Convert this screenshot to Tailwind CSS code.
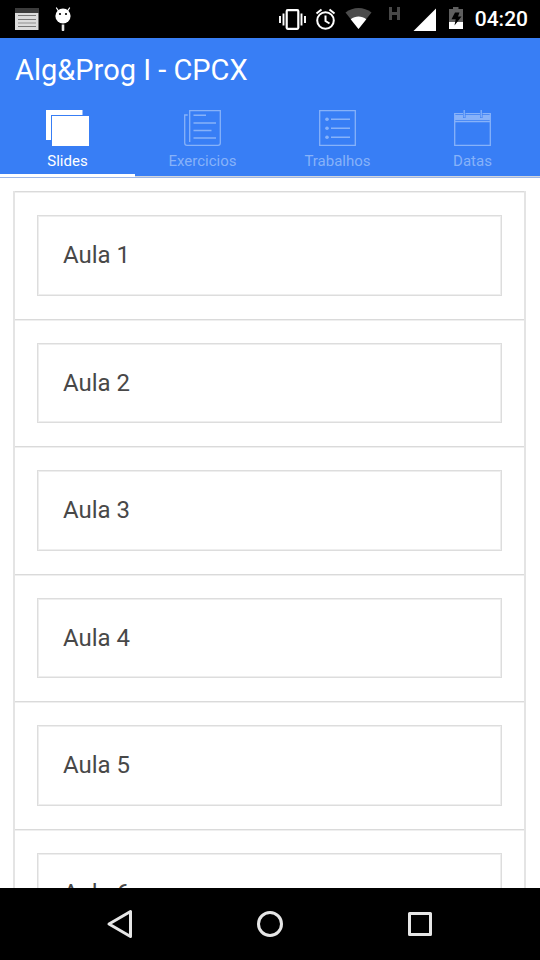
<!DOCTYPE html>
<html lang="pt-BR">
<head>
<meta charset="utf-8">
<meta name="viewport" content="width=device-width, initial-scale=1">
<title>Alg&amp;Prog I - CPCX</title>
<script src="https://cdn.jsdelivr.net/npm/@tailwindcss/browser@4"></script>
</head>
<body class="flex h-screen flex-col overflow-hidden bg-white font-['Roboto',sans-serif]">

<!-- System status bar -->
<div class="flex h-[38px] shrink-0 items-center justify-between bg-black pr-3 pl-[15px] text-white">
  <div class="flex items-center gap-4">
    <svg class="h-[22px] w-6" viewBox="0 0 24 22" aria-hidden="true">
      <path fill="#3c3c3c" d="M0 0h24v5H0z"/><path fill="#dcdcdc" d="M0 5h23.500v17H0z"/>
      <path stroke="#777" stroke-width="1" d="M3 7.500h18M3 11.500h18M3 18.500h18"/><path stroke="#aaa" stroke-width="1.500" d="M3 15h18"/>
    </svg>
    <svg class="h-6 w-4" viewBox="0 0 16 24" aria-hidden="true">
      <path stroke="#fff" stroke-width="1.300" stroke-linecap="round" d="M1.500 1l2 3M14.500 1l-2 3"/>
      <circle cx="8" cy="9" r="7.600" fill="#fff"/><circle cx="5" cy="7" r="1.100" fill="#000"/><circle cx="11" cy="7" r="1.100" fill="#000"/>
      <path fill="#e4e4e4" d="M6.700 17.500h2.600V23a1 1 0 0 1-2.600 0z"/>
    </svg>
  </div>
  <div class="flex items-center gap-1.5">
    <svg class="h-[38px] w-[190px]" viewBox="279 0 190 38" fill="none" aria-hidden="true">
      <rect x="286.700" y="10.200" width="11.600" height="18.600" rx="1" stroke="#fff" stroke-width="2.200"/>
      <path stroke="#fff" stroke-width="1.900" d="M283.500 13.500v12M280 16v7M301.500 13.500v12M305 16v7"/>
      <circle cx="325.500" cy="20.500" r="8.300" stroke="#fff" stroke-width="2"/>
      <path stroke="#fff" stroke-width="2" d="M325.500 15.500v5.500l4 2.500M316.500 13.500l5-4M334.500 13.500l-5-4"/>
      <path fill="#4c4c4c" d="M358.500 29L345.500 12.500c7.500-6 18.500-6 26 0z"/>
      <path fill="#fff" d="M358.500 29l-7.800-9.800c4.600-3.700 11-3.700 15.600 0z"/>
      <path stroke="#484848" stroke-width="3" d="M390.500 7v13M398.500 7v13M390 13.500h9"/>
      <path fill="#fff" d="M436 8.500V31h-22.500z"/>
      <path fill="#5f5f5f" d="M449 9h4V7h5.500v2h4.500v13h-14z"/><path fill="#fff" d="M449 22h14v7h-14z"/>
      <path fill="#000" d="M455 12.500h4.500l-1.500 4h3.500l-7 9 1.200-6.200h-4.200z"/>
    </svg>
    <time class="text-[21px] leading-[38px] font-medium">04:20</time>
  </div>
</div>

<!-- App bar and tabs -->
<header class="shrink-0 border-b border-[#9db6e6] bg-[#387ef5] text-white">
  <h1 class="px-[15px] pt-3 pb-5 text-[29px] leading-10">Alg&amp;Prog I - CPCX</h1>
  <nav class="grid grid-cols-4 text-center text-[15px] leading-[18px]">
    <a href="#slides" aria-current="page" class="flex flex-col items-center gap-1.5 border-b-3 border-white pb-1">
      <svg class="h-9 w-[43px]" viewBox="0 0 43 36" fill="#fff" aria-hidden="true"><path d="M0 0h36.500v5H5v25H0z"/><path d="M6 6h37v30H6z"/></svg>
      <span>Slides</span>
    </a>
    <a href="#exercicios" class="flex flex-col items-center gap-1.5 border-b border-[#d3d6dc] pb-1 text-[#87b2f9]">
      <svg class="h-9 w-[37px]" viewBox="0 0 37 36" fill="none" stroke="currentColor" stroke-width="1.300" aria-hidden="true">
        <path d="M5.700 32V.700h30.600v32.300q0 2.300-2.300 2.300H3q-2.300 0-2.300-2.300V5h3"/><path stroke-width="1.500" d="M9.500 5.200h12.500M9.500 13h22.500M9.500 20.500h18M9.500 28h22.500"/>
      </svg>
      <span>Exercicios</span>
    </a>
    <a href="#trabalhos" class="flex flex-col items-center gap-1.5 border-b border-[#d3d6dc] pb-1 text-[#87b2f9]">
      <svg class="h-9 w-[37px]" viewBox="0 0 37 36" fill="none" stroke="currentColor" stroke-width="1.300" aria-hidden="true">
        <path d="M.700.700h35.600v34.600H.700z"/><path stroke-width="1.500" d="M12 9.200h19M12 18.200h19M12 27.200h19"/>
        <g fill="currentColor" stroke="none"><circle cx="8" cy="9.200" r="1.800"/><circle cx="8" cy="18.200" r="1.800"/><circle cx="8" cy="27.200" r="1.800"/></g>
      </svg>
      <span>Trabalhos</span>
    </a>
    <a href="#datas" class="flex flex-col items-center gap-1.5 border-b border-[#d3d6dc] pb-1 text-[#87b2f9]">
      <svg class="h-9 w-[37px]" viewBox="0 0 37 36" fill="none" stroke="currentColor" stroke-width="1.300" aria-hidden="true">
        <path d="M9 3.700H.700v31.600h35.600V3.700H28.500M11.500 3.700H26M1 11.500h35"/><path stroke-width="1.300" d="M10.200 0v7.500M27.200 0v7.500"/>
        <path fill="currentColor" stroke="none" d="M1 5h8v3h2.500V5H26v3h2.500V5H36v5H1z"/>
      </svg>
      <span>Datas</span>
    </a>
  </nav>
</header>

<!-- Lesson list -->
<main class="min-h-0 flex-1 overflow-hidden pt-[13px] pr-3.5 pl-[13px] text-2xl text-[#484848]">
  <ul class="border-x-2 border-[#e4e4e4]">
    <li class="border-t border-[#dadada] px-[22px] py-[23px] shadow-[inset_0_1px_0_0_#efefef]"><a href="#aula1" class="flex h-[81px] items-center border border-[#dddddd] px-[25px] pb-px shadow-[inset_0_0_0_1px_#eeeeee]">Aula 1</a></li>
    <li class="border-t border-[#dadada] px-[22px] py-[23px] shadow-[inset_0_1px_0_0_#efefef]"><a href="#aula2" class="flex h-20 items-center border border-[#dddddd] px-[25px] pb-px shadow-[inset_0_0_0_1px_#eeeeee]">Aula 2</a></li>
    <li class="border-t border-[#dadada] px-[22px] py-[23px] shadow-[inset_0_1px_0_0_#efefef]"><a href="#aula3" class="flex h-[81px] items-center border border-[#dddddd] px-[25px] pb-px shadow-[inset_0_0_0_1px_#eeeeee]">Aula 3</a></li>
    <li class="border-t border-[#dadada] px-[22px] py-[23px] shadow-[inset_0_1px_0_0_#efefef]"><a href="#aula4" class="flex h-20 items-center border border-[#dddddd] px-[25px] pb-px shadow-[inset_0_0_0_1px_#eeeeee]">Aula 4</a></li>
    <li class="border-t border-[#dadada] px-[22px] py-[23px] shadow-[inset_0_1px_0_0_#efefef]"><a href="#aula5" class="flex h-[81px] items-center border border-[#dddddd] px-[25px] pb-px shadow-[inset_0_0_0_1px_#eeeeee]">Aula 5</a></li>
    <li class="border-t border-[#dadada] px-[22px] py-[23px] shadow-[inset_0_1px_0_0_#efefef]"><a href="#aula6" class="flex h-20 items-center border border-[#dddddd] px-[25px] pb-px shadow-[inset_0_0_0_1px_#eeeeee]">Aula 6</a></li>
  </ul>
</main>

<!-- System navigation -->
<footer class="flex h-[72px] shrink-0 items-center justify-center gap-[102px] bg-black text-[#e6e6e6]">
  <button type="button" aria-label="Voltar" class="size-12"><svg class="size-12" viewBox="0 0 48 48" fill="none" stroke="currentColor" stroke-width="3" stroke-linejoin="round" aria-hidden="true"><path d="M34.500 11.500v25L13 24z"/></svg></button>
  <button type="button" aria-label="Início" class="size-12"><svg class="size-12" viewBox="0 0 48 48" fill="none" stroke="currentColor" stroke-width="3" aria-hidden="true"><circle cx="24" cy="24" r="11.500"/></svg></button>
  <button type="button" aria-label="Recentes" class="size-12"><svg class="size-12" viewBox="0 0 48 48" fill="none" stroke="currentColor" stroke-width="3" stroke-linejoin="round" aria-hidden="true"><path d="M13.500 13.500h21v21h-21z"/></svg></button>
</footer>
</body>
</html>
